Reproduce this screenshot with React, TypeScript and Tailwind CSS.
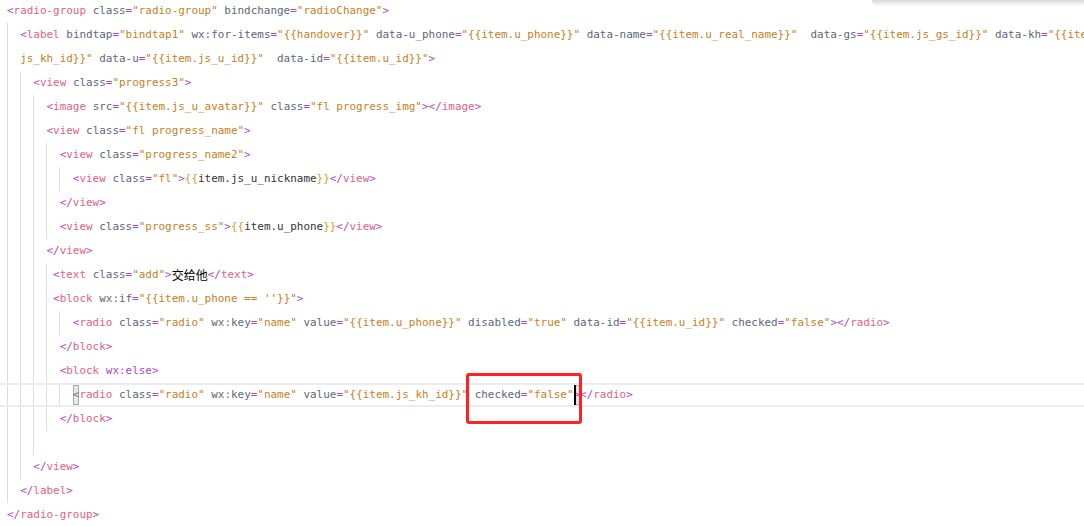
import React from "react";

type Tok = { c: string; t: string };

const C = {
  br: "text-[#b046c8]",
  tag: "text-[#e8607f]",
  attr: "text-[#5c6878]",
  str: "text-[#c8801c]",
  txt: "text-[#333333]",
  mu: "text-[#dc9a22]",
};

// small xml-ish tokenizer, good enough for wxml
function tokenize(src: string, start: "text" | "tag" = "text"): Tok[] {
  const out: Tok[] = [];
  let mode = start;
  let i = 0;
  const push = (c: string, t: string) => out.push({ c, t });
  while (i < src.length) {
    const rest = src.slice(i);
    if (mode === "text") {
      const m = rest.match(/^(<\/?)([\w-]+)/);
      if (m) {
        push(C.br, m[1]);
        push(C.tag, m[2]);
        i += m[0].length;
        mode = "tag";
        continue;
      }
      if (rest.startsWith("{{") || rest.startsWith("}}")) {
        push(C.mu, rest.slice(0, 2));
        i += 2;
        continue;
      }
      const n = (rest.match(/^[^<{}]+/) || rest.match(/^./))![0];
      push(C.txt, n);
      i += n.length;
      continue;
    }
    if (rest[0] === ">") {
      push(C.br, ">");
      i++;
      mode = "text";
      continue;
    }
    if (rest[0] === "=") {
      push(C.br, "=");
      i++;
      continue;
    }
    if (rest[0] === '"') {
      const end = src.indexOf('"', i + 1);
      const s = end < 0 ? rest : src.slice(i, end + 1);
      push(C.str, s);
      i += s.length;
      continue;
    }
    const ws = rest.match(/^\s+/);
    if (ws) {
      push(C.txt, ws[0]);
      i += ws[0].length;
      continue;
    }
    const a = (rest.match(/^[\w:.\-/]+/) || rest.match(/^./))![0];
    push(a === "wx:else" ? C.br : C.attr, a);
    i += a.length;
  }
  return out;
}

const Toks = ({ toks }: { toks: Tok[] }) => (
  <>
    {toks.map((k, i) =>
      /[\u4e00-\u9fff]/.test(k.t) ? (
        <span key={i} className="text-[12px] text-black font-['Noto_Sans_CJK_SC',sans-serif]">
          {k.t}
        </span>
      ) : (
        <span key={i} className={k.c}>
          {k.t}
        </span>
      )
    )}
  </>
);

const sp = (n: number) => " ".repeat(n);

const guideX: Record<number, string> = {
  0: "left-[7px]",
  2: "left-[20px]",
  4: "left-[33px]",
  6: "left-[46px]",
  8: "left-[59px]",
};

// which indent guides run through each line
const guides: number[][] = [
  [],
  [0],
  [0],
  [0, 2],
  [0, 2, 4],
  [0, 2, 4],
  [0, 2, 4, 6],
  [0, 2, 4, 6, 8],
  [0, 2, 4, 6],
  [0, 2, 4, 6],
  [0, 2, 4],
  [0, 2, 4, 6],
  [0, 2, 4, 6],
  [0, 2, 4, 6, 8],
  [0, 2, 4, 6],
  [0, 2, 4, 6],
  [0, 2, 4, 6, 8],
  [0, 2, 4, 6],
  [0, 2, 4],
  [0, 2],
  [0],
  [],
];

const src: Tok[][] = [
  tokenize('<radio-group class="radio-group" bindchange="radioChange">'),
  tokenize(
    sp(2) +
      '<label bindtap="bindtap1" wx:for-items="{{handover}}" data-u_phone="{{item.u_phone}}" data-name="{{item.u_real_name}}"  data-gs="{{item.js_gs_id}}" data-kh="{{item.js_kh_id}}"'
  ),
  [{ c: C.txt, t: sp(2) }, { c: C.str, t: 'js_kh_id}}"' }, ...tokenize(' data-u="{{item.js_u_id}}"  data-id="{{item.u_id}}">', "tag")],
  tokenize(sp(4) + '<view class="progress3">'),
  tokenize(sp(6) + '<image src="{{item.js_u_avatar}}" class="fl progress_img"></image>'),
  tokenize(sp(6) + '<view class="fl progress_name">'),
  tokenize(sp(8) + '<view class="progress_name2">'),
  tokenize(sp(10) + '<view class="fl">{{item.js_u_nickname}}</view>'),
  tokenize(sp(8) + "</view>"),
  tokenize(sp(8) + '<view class="progress_ss">{{item.u_phone}}</view>'),
  tokenize(sp(6) + "</view>"),
  tokenize(sp(7) + '<text class="add">交给他</text>'),
  tokenize(sp(7) + "<block wx:if=\"{{item.u_phone == ''}}\">"),
  tokenize(
    sp(10) +
      '<radio class="radio" wx:key="name" value="{{item.u_phone}}" disabled="true" data-id="{{item.u_id}}" checked="false"></radio>'
  ),
  tokenize(sp(8) + "</block>"),
  tokenize(sp(8) + "<block wx:else>"),
  [],
  tokenize(sp(8) + "</block>"),
  [],
  tokenize(sp(4) + "</view>"),
  tokenize(sp(2) + "</label>"),
  tokenize("</radio-group>"),
];

const CurrentLine = () => (
  <>
    <span className={C.txt}>{sp(10)}</span>
    <span className="inline-block h-5 leading-5 bg-[#e3ebe3] shadow-[inset_0_0_0_1px_#a6aea6] text-[#b046c8]">&lt;</span>
    <span className={C.tag}>radio</span>
    <Toks toks={tokenize(' class="radio" wx:key="name" value="{{item.js_kh_id}}" checked="false"', "tag")} />
    <span className="inline-block w-[2px] h-5 -mr-[2px] bg-black align-middle relative z-10" />
    <span className="inline-block h-5 leading-5 bg-[#dfe5df] shadow-[inset_0_0_0_1px_#b4bab4] text-[#b046c8]">&gt;</span>
    <Toks toks={tokenize("</radio>")} />
  </>
);

export default function App() {
  return (
    <div className="relative w-[1084px] h-[526px] overflow-hidden bg-white font-['DejaVu_Sans_Mono',monospace] text-[10.95px]">
      <div className="-mt-px flex flex-col">
        {src.map((toks, i) => (
          <div
            key={i}
            className={
              "relative h-6 flex items-center pl-[7px] whitespace-pre " +
              (i === 16 ? "border-y-2 border-[#ececec]" : "")
            }
          >
            {guides[i].map((g) => (
              <span key={g} className={"absolute top-0 bottom-0 w-px bg-[#dcdcdc] " + guideX[g]} />
            ))}
            {i === 16 ? <CurrentLine /> : <Toks toks={toks} />}
          </div>
        ))}
      </div>
      <div className="absolute top-0 right-0 w-[212px] h-[7px] rounded-bl-md bg-linear-to-b from-[#dadada] to-transparent" />
      <div className="absolute left-[466px] top-[373px] w-[116px] h-[51px] rounded-[3px] border-[3px] border-[#ff2222]" />
    </div>
  );
}
